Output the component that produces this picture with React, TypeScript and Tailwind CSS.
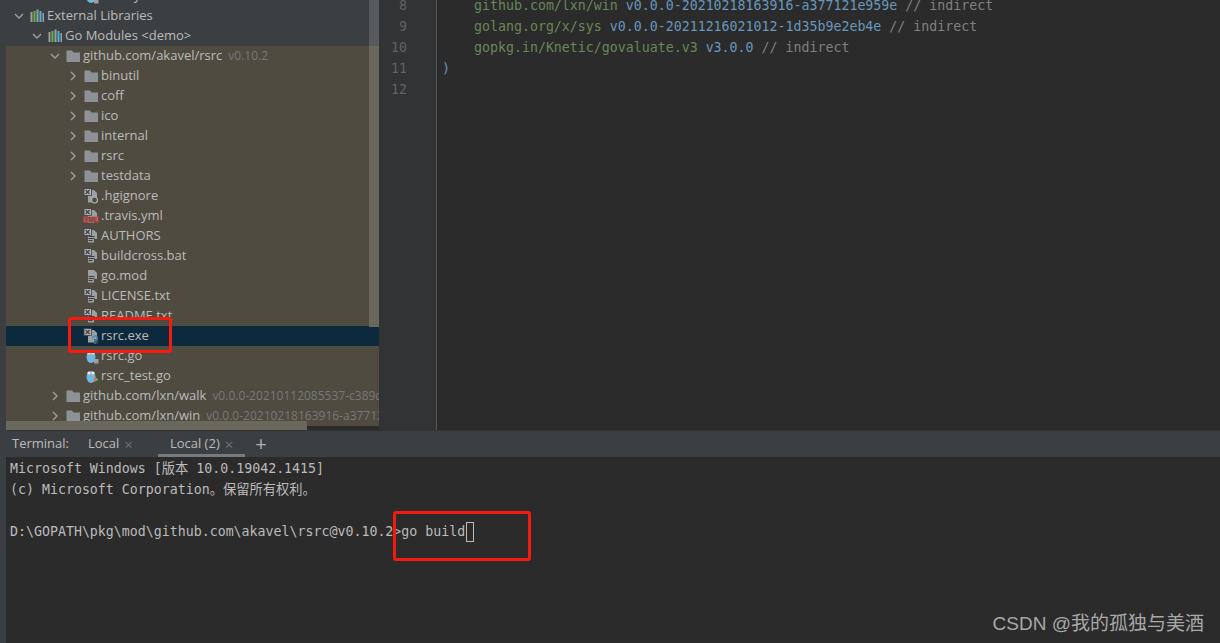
const mono = "font-['DejaVu_Sans_Mono','Noto_Sans_CJK_SC',monospace]";

type Kind = "folder" | "plain" | "yml" | "text" | "mod" | "exe" | "go" | "gotest" | "hg" | "lib" | "none";

type Row = {
  label: string;
  depth: number;
  icon: Kind;
  arrow?: "down" | "right";
  version?: string;
  selected?: boolean;
  top?: boolean;
};

const rows: Row[] = [
  { label: "rsrc.syso", depth: 3, icon: "go", top: true },
  { label: "External Libraries", depth: 0, icon: "lib", arrow: "down", top: true },
  { label: "Go Modules <demo>", depth: 1, icon: "lib", arrow: "down", top: true },
  { label: "github.com/akavel/rsrc", depth: 2, icon: "folder", arrow: "down", version: "v0.10.2" },
  { label: "binutil", depth: 3, icon: "folder", arrow: "right" },
  { label: "coff", depth: 3, icon: "folder", arrow: "right" },
  { label: "ico", depth: 3, icon: "folder", arrow: "right" },
  { label: "internal", depth: 3, icon: "folder", arrow: "right" },
  { label: "rsrc", depth: 3, icon: "folder", arrow: "right" },
  { label: "testdata", depth: 3, icon: "folder", arrow: "right" },
  { label: ".hgignore", depth: 3, icon: "hg" },
  { label: ".travis.yml", depth: 3, icon: "yml" },
  { label: "AUTHORS", depth: 3, icon: "text" },
  { label: "buildcross.bat", depth: 3, icon: "text" },
  { label: "go.mod", depth: 3, icon: "mod" },
  { label: "LICENSE.txt", depth: 3, icon: "text" },
  { label: "README.txt", depth: 3, icon: "text" },
  { label: "rsrc.exe", depth: 3, icon: "exe", selected: true },
  { label: "rsrc.go", depth: 3, icon: "go" },
  { label: "rsrc_test.go", depth: 3, icon: "gotest" },
  { label: "github.com/lxn/walk", depth: 2, icon: "folder", arrow: "right", version: "v0.0.0-20210112085537-c389da54e794" },
  { label: "github.com/lxn/win", depth: 2, icon: "folder", arrow: "right", version: "v0.0.0-20210218163916-a377121e959e" },
];

function FileBase({ x = true }: { x?: boolean }) {
  return (
    <>
      <path d="M5 2h6l3 3v9.5H5z" fill="#9da0a2" />
      <path d="M11 11h4v4.5h-4z" fill="#4f4b41" />
      {x && <rect x="1" y="0.5" width="7.5" height="7" fill="#afb1b3" stroke="#3c3f41" strokeWidth="0.8" />}
      {x && <path d="M2.6 2l4 4M6.6 2l-4 4" stroke="#3c3f41" strokeWidth="1.1" />}
    </>
  );
}

function TreeIcon({ kind }: { kind: Kind }) {
  if (kind === "none") return null;
  if (kind === "folder") {
    return (
      <svg width="16" height="16" viewBox="0 0 16 16" className="shrink-0">
        <path d="M1.5 2.5h5.5l1.5 2h6.5v9.5h-13.5z" fill="#8e9297" />
      </svg>
    );
  }
  if (kind === "lib") {
    return (
      <svg width="16" height="16" viewBox="0 0 16 16" className="shrink-0">
        <rect x="1.5" y="4" width="2" height="10" fill="#9da0a2" />
        <rect x="4.5" y="3" width="2" height="11" fill="#62b543" />
        <rect x="7.5" y="1.5" width="2" height="12.5" fill="#9da0a2" />
        <rect x="10.5" y="3" width="2" height="11" fill="#40b6e0" />
        <rect x="13.5" y="5" width="1.5" height="9" fill="#9da0a2" />
      </svg>
    );
  }
  if (kind === "go" || kind === "gotest") {
    return (
      <svg width="16" height="16" viewBox="0 0 16 16" className="shrink-0">
        <ellipse cx="8" cy="9" rx="4.5" ry="6" fill="#6cb6e0" />
        <circle cx="6" cy="5" r="1.6" fill="#e8eef2" />
        <circle cx="10" cy="5" r="1.6" fill="#e8eef2" />
        <rect x="7" y="6.5" width="2" height="1.4" fill="#c9a27a" />
        {kind === "gotest" ? (
          <>
            <rect x="11" y="9.5" width="2" height="4" fill="#d9734a" />
            <path d="M13 9.5l2.5 2-2.5 2z" fill="#62b543" />
          </>
        ) : (
          <path d="M11 11h4.5v4.5H11z" fill="#9da0a2" />
        )}
      </svg>
    );
  }
  return (
    <svg width="16" height="16" viewBox="0 0 16 16" className="shrink-0">
      <FileBase x={kind !== "mod"} />
      {(kind === "text" || kind === "mod") && (
        <path d="M5.5 8.5h6M5.5 10.5h6M5.5 12.5h4" stroke="#3c3f41" strokeWidth="1" />
      )}
      {kind === "yml" && (
        <>
          <rect x="0.5" y="8.5" width="15" height="6" fill="#c75450" />
          <text x="1" y="14" fontSize="6.5" fill="#3c3f41" fontFamily="Liberation Sans">YML</text>
        </>
      )}
      {kind === "hg" && <circle cx="11.5" cy="12" r="3" fill="#4f4b41" stroke="#afb1b3" strokeWidth="1.2" />}
      {kind === "exe" && (
        <path d="M9.6 10.2c0-3 4.6-3 4.6-.2 0 1.9-2.3 1.7-2.3 3.4M11.9 14.6v1.2" stroke="#3592c4" strokeWidth="1.5" fill="none" />
      )}
    </svg>
  );
}

function Arrow({ dir }: { dir: "down" | "right" }) {
  return (
    <svg width="16" height="16" viewBox="0 0 16 16" className="shrink-0">
      {dir === "down" ? (
        <path d="M4 6l4 4 4-4" stroke="#9da0a2" strokeWidth="1.4" fill="none" />
      ) : (
        <path d="M6 4l4 4-4 4" stroke="#9da0a2" strokeWidth="1.4" fill="none" />
      )}
    </svg>
  );
}

function TreeRow({ row }: { row: Row }) {
  const pad = ["pl-[5px]", "pl-[23px]", "pl-[41px]", "pl-[59px]"][row.depth];
  const bg = row.selected ? "bg-[#0d293e]" : row.top ? "bg-[#3c3f41]" : "bg-[#4f4b41]";
  return (
    <div className={`flex h-5 items-center whitespace-nowrap ${pad} ${bg}`}>
      {row.arrow ? <Arrow dir={row.arrow} /> : <span className="w-4 shrink-0" />}
      <span className="ml-[2px] flex"><TreeIcon kind={row.icon} /></span>
      <span className="ml-[2px] text-[#bbbbbb]">{row.label}</span>
      {row.version && <span className="ml-[6px] text-[12px] text-[#787878]">{row.version}</span>}
    </div>
  );
}

function Sidebar() {
  return (
    <div className="relative h-full w-[373px] overflow-hidden font-['Open_Sans',sans-serif] text-[13px]">
      <div className="-mt-[14px]">
        {rows.map((r) => (
          <TreeRow key={r.label} row={r} />
        ))}
      </div>
      {/* scrollbars */}
      <div className="absolute right-0 top-0 h-[46px] w-[10px] bg-[#585b5d]" />
      <div className="absolute right-0 top-[46px] h-[281px] w-[10px] bg-[#6a675d]" />
      <div className="absolute bottom-0 left-0 h-[9px] w-[301px] bg-[#6a675d]" />
    </div>
  );
}

function Editor() {
  const gutter = [8, 9, 10, 11, 12];
  return (
    <div className={`flex flex-1 ${mono} text-[13.28px]`}>
      <div className="w-[57px] shrink-0 bg-[#313335] pr-[29px] pt-[-4px] text-right text-[#606366]">
        <div className="-mt-[5px]">
          {gutter.map((n) => (
            <div key={n} className="h-[21px] leading-[21px]">{n}</div>
          ))}
        </div>
      </div>
      <div className="flex-1 overflow-hidden whitespace-nowrap border-l border-[#555555] bg-[#2b2b2b] pl-[5px]">
        <div className="-mt-[5px]">
          <div className="h-[21px] pl-8 leading-[21px]">
            <span className="text-[#6a8759]">github.com/lxn/win</span> <span className="text-[#6897bb]">v0.0.0-20210218163916-a377121e959e</span> <span className="text-[#808080]">// indirect</span>
          </div>
          <div className="h-[21px] pl-8 leading-[21px]">
            <span className="text-[#6a8759]">golang.org/x/sys</span> <span className="text-[#6897bb]">v0.0.0-20211216021012-1d35b9e2eb4e</span> <span className="text-[#808080]">// indirect</span>
          </div>
          <div className="h-[21px] pl-8 leading-[21px]">
            <span className="text-[#6a8759]">gopkg.in/Knetic/govaluate.v3</span> <span className="text-[#6897bb]">v3.0.0</span> <span className="text-[#808080]">// indirect</span>
          </div>
          <div className="h-[21px] leading-[21px] text-[#6897bb]">)</div>
        </div>
      </div>
    </div>
  );
}

function Terminal() {
  return (
    <div className="flex min-h-0 flex-1 flex-col">
      <div className="flex h-[27px] items-stretch border-t border-[#323232] bg-[#3c3f41] pl-[6px] font-['Open_Sans',sans-serif] text-[13px] text-[#bbbbbb]">
        <span className="flex items-center pr-[19px]">Terminal:</span>
        <span className="flex items-center gap-[5px] pr-[25px]">
          Local <span className="text-[15px] leading-none text-[#6e7072]">×</span>
        </span>
        <span className="flex items-center gap-[5px] border-b-[3px] border-[#747a80] px-3 pt-[3px]">
          Local (2) <span className="text-[15px] leading-none text-[#6e7072]">×</span>
        </span>
        <span className="flex items-center pl-[10px] text-[20px] leading-none text-[#afb1b3]">+</span>
      </div>
      <div className={`flex-1 bg-[#2b2b2b] pl-1 pt-[1px] text-[#bbbbbb] ${mono} text-[13.28px]`}>
        <div className="h-[21px] leading-[21px] whitespace-pre">Microsoft Windows [版本 10.0.19042.1415]</div>
        <div className="h-[21px] leading-[21px] whitespace-pre">(c) Microsoft Corporation。保留所有权利。</div>
        <div className="h-[21px]" />
        <div className="flex h-[21px] items-center leading-[21px] whitespace-pre">
          D:\GOPATH\pkg\mod\github.com\akavel\rsrc@v0.10.2&gt;go build
          <span className="ml-[1px] h-[20px] w-[8px] border border-[#bbbbbb]" />
        </div>
      </div>
    </div>
  );
}

export default function App() {
  return (
    <div className="relative flex h-[643px] w-[1220px] overflow-hidden bg-[#2b2b2b]">
      <div className="w-[6px] shrink-0 bg-[#3c3f41]" />
      <div className="flex min-w-0 flex-1 flex-col">
        <div className="flex h-[430px] shrink-0">
          <Sidebar />
          <Editor />
        </div>
        <Terminal />
      </div>

      {/* annotations */}
      <div className="absolute left-[68px] top-[317px] h-[36px] w-[104px] rounded-[3px] border-[3px] border-[#f5190f]" />
      <div className="absolute left-[393px] top-[511px] h-[50px] w-[138px] rounded-[3px] border-[3px] border-[#f5190f]" />
      <div className="absolute right-[16px] top-[610px] font-['Liberation_Sans','Noto_Sans_CJK_SC',sans-serif] text-[19px] text-[#a8a8a8]">
        CSDN @我的孤独与美酒
      </div>
    </div>
  );
}
